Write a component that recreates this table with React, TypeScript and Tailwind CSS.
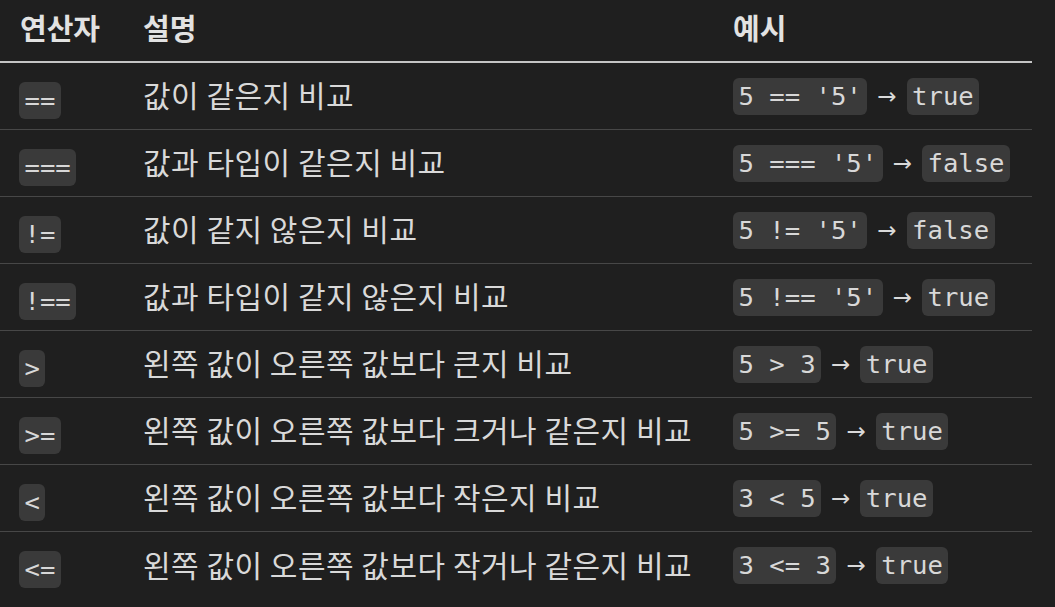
const rows = [
  { op: "==", desc: "값이 같은지 비교", expr: "5 == '5'", result: "true" },
  { op: "===", desc: "값과 타입이 같은지 비교", expr: "5 === '5'", result: "false" },
  { op: "!=", desc: "값이 같지 않은지 비교", expr: "5 != '5'", result: "false" },
  { op: "!==", desc: "값과 타입이 같지 않은지 비교", expr: "5 !== '5'", result: "true" },
  { op: ">", desc: "왼쪽 값이 오른쪽 값보다 큰지 비교", expr: "5 > 3", result: "true" },
  { op: ">=", desc: "왼쪽 값이 오른쪽 값보다 크거나 같은지 비교", expr: "5 >= 5", result: "true" },
  { op: "<", desc: "왼쪽 값이 오른쪽 값보다 작은지 비교", expr: "3 < 5", result: "true" },
  { op: "<=", desc: "왼쪽 값이 오른쪽 값보다 작거나 같은지 비교", expr: "3 <= 3", result: "true" },
];

function Code({ children }: { children: string }) {
  return (
    <code className="inline-block whitespace-pre rounded-[6px] bg-[#3a3a3a] px-[5.5px] font-['DejaVu_Sans_Mono',monospace] text-[25.6px] leading-[37px] tracking-normal text-[#d8d8d8]">
      {children}
    </code>
  );
}

export default function App() {
  return (
    <div className="min-h-[607px] w-[1055px] bg-[#1f1f1f] font-['Noto_Sans_CJK_KR','Noto_Sans',sans-serif] text-[#d9d9d9]">
      <div className="w-[1032px]">
        <div className="grid h-[63px] grid-cols-[124px_590px_1fr] items-center border-b-2 border-[#c4c4c4] pb-[6px] text-[29px] font-bold text-[#e2e2e2]">
          <div className="pl-[20px]">연산자</div>
          <div className="pl-[19px]">설명</div>
          <div className="pl-[19px]">예시</div>
        </div>
        {rows.map((r, i) => (
          <div
            key={r.op}
            className={`grid h-[67px] grid-cols-[124px_590px_1fr] items-center text-[30px] tracking-[0.5px] ${
              i < rows.length - 1 ? "border-b border-[#474747]" : ""
            }`}
          >
            <div className="pl-[19px]">
              <Code>{r.op}</Code>
            </div>
            <div className="pl-[19px] pb-[3px]">{r.desc}</div>
            <div className="flex items-center gap-[10px] pl-[19px]">
              <Code>{r.expr}</Code>
              <span className="font-['DejaVu_Sans',sans-serif] text-[23px] tracking-normal">→</span>
              <Code>{r.result}</Code>
            </div>
          </div>
        ))}
      </div>
    </div>
  );
}
